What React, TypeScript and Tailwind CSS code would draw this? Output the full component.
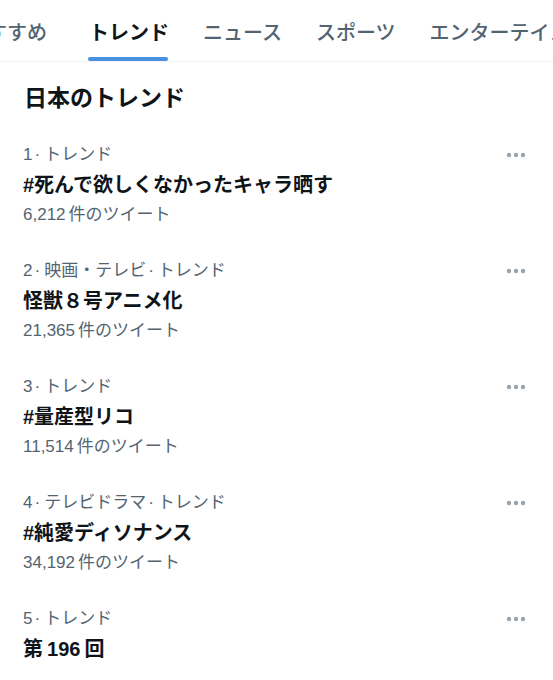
const tabs = [
  { label: "おすすめ", active: false },
  { label: "トレンド", active: true },
  { label: "ニュース", active: false },
  { label: "スポーツ", active: false },
  { label: "エンターテイメント", active: false },
];

const trends = [
  { meta: ["1", "トレンド"], title: "#死んで欲しくなかったキャラ晒す", count: "6,212" },
  { meta: ["2", "映画・テレビ", "トレンド"], title: "怪獣８号アニメ化", count: "21,365" },
  { meta: ["3", "トレンド"], title: "#量産型リコ", count: "11,514" },
  { meta: ["4", "テレビドラマ", "トレンド"], title: "#純愛ディソナンス", count: "34,192" },
  { meta: ["5", "トレンド"], title: "第\u2009196\u2009回", count: "" },
];

const MoreDots = () => (
  <svg width="20" height="6" viewBox="0 0 20 6" className="text-[#9aa4ad]">
    <circle cx="3" cy="3" r="2.2" fill="currentColor" />
    <circle cx="10" cy="3" r="2.2" fill="currentColor" />
    <circle cx="17" cy="3" r="2.2" fill="currentColor" />
  </svg>
);

export default function App() {
  return (
    <div
      className="w-[553px] h-[680px] overflow-hidden bg-white text-[#0f1419]"
      style={{ fontFamily: '"Liberation Sans", "Noto Sans CJK JP", sans-serif' }}
    >
      <nav className="h-[62px] border-b border-[#eff3f4] flex items-stretch whitespace-nowrap overflow-hidden">
        <div className="flex -ml-[50px]">
          {tabs.map((t, i) => (
            <div
              key={t.label}
              className={i === 0 ? "pl-[17px] pr-[25px] flex items-center" : "px-[17px] flex items-center"}
            >
              <span
                className={
                  t.active
                    ? "relative h-full flex items-center text-[20px] font-bold text-[#0f1419] pt-[4px]"
                    : "relative h-full flex items-center text-[20px] font-medium text-[#536471] pt-[4px]"
                }
              >
                {t.label}
                {t.active && (
                  <span className="absolute left-[-1px] right-[1px] bottom-0 h-[4px] rounded-full bg-[#4a90e2]" />
                )}
              </span>
            </div>
          ))}
        </div>
      </nav>

      <h2 className="px-[24px] mt-[21px] mb-[13px] text-[23px] leading-[30px] font-bold">
        日本のトレンド
      </h2>

      <ul>
        {trends.map((tr) => (
          <li key={tr.title} className="pl-[23px] pr-[27px] pt-[16px] pb-[14px]">
            <div className="flex items-center justify-between h-[26px]">
              <span className="text-[17px] text-[#536471]">
                {tr.meta.map((part, i) => (
                  <span key={part}>
                    {i > 0 && <span className="ml-[2px] mr-[4px]">·</span>}
                    {part}
                  </span>
                ))}
              </span>
              <MoreDots />
            </div>
            <div className="text-[20px] leading-[34px] font-bold">{tr.title}</div>
            {tr.count && (
              <div className="text-[17px] leading-[26px] text-[#536471]">
                {tr.count}
                <span className="ml-[3px]">件のツイート</span>
              </div>
            )}
          </li>
        ))}
      </ul>
    </div>
  );
}
